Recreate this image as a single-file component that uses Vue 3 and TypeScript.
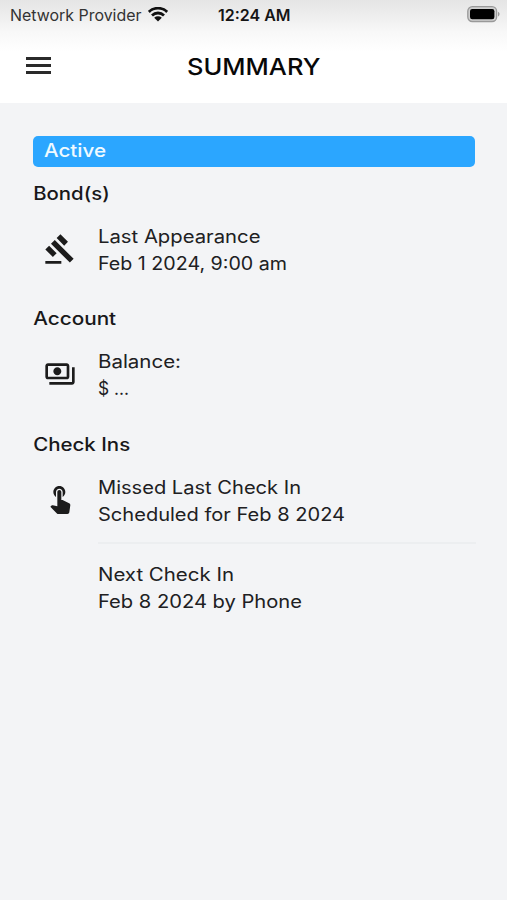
<script setup lang="ts">
interface Line { text: string; width: number }
interface Row { icon?: string; raised?: boolean; lines: Line[] }
interface Section { title: string; width: number; rows: Row[] }

const gavel = 'M1 21h12v2H1zM5.245 8.07l2.83-2.827 14.14 14.142-2.828 2.828zM12.317 1l5.657 5.656-2.83 2.83-5.654-5.66zM3.825 9.485l5.657 5.657-2.828 2.828-5.657-5.657z'
const payments = 'M19 14V6c0-1.1-.9-2-2-2H3c-1.1 0-2 .9-2 2v8c0 1.1.9 2 2 2h14c1.1 0 2-.9 2-2zm-2 0H3V6h14v8zm-7-7c-1.66 0-3 1.34-3 3s1.34 3 3 3 3-1.34 3-3-1.34-3-3-3zm13 0v11c0 1.1-.9 2-2 2H4v-2h17V7h2z'
const touch = 'M9 11.24V7.5C9 6.12 10.12 5 11.5 5S14 6.12 14 7.5v3.74c1.21-.81 2-2.18 2-3.74C16 5.01 13.99 3 11.5 3S7 5.01 7 7.5c0 1.56.79 2.93 2 3.74zm9.84 4.63l-4.54-2.26c-.17-.07-.35-.11-.54-.11H13v-6c0-.83-.67-1.5-1.5-1.5S10 6.67 10 7.5v10.74l-3.43-.72c-.08-.01-.15-.03-.24-.03-.31 0-.59.13-.79.33l-.79.8 4.94 4.94c.27.27.65.44 1.06.44h6.79c.75 0 1.33-.55 1.44-1.28l.75-5.27c.01-.07.02-.14.02-.2 0-.62-.38-1.16-.91-1.38z'

const sections: Section[] = [
  { title: 'Bond(s)', width: 76.5, rows: [
    { icon: gavel, lines: [{ text: 'Last Appearance', width: 162.5 }, { text: 'Feb 1 2024, 9:00 am', width: 189 }] },
  ] },
  { title: 'Account', width: 83, rows: [
    { icon: payments, lines: [{ text: 'Balance:', width: 83 }, { text: '$ ...', width: 31 }] },
  ] },
  { title: 'Check Ins', width: 97, rows: [
    { icon: touch, raised: true, lines: [{ text: 'Missed Last Check In', width: 203 }, { text: 'Scheduled for Feb 8 2024', width: 247 }] },
    { lines: [{ text: 'Next Check In', width: 136 }, { text: 'Feb 8 2024 by Phone', width: 204 }] },
  ] },
]
</script>

<template>
  <div class="screen">
    <header class="top">
      <div class="status">
        <div class="carrier">
          <svg class="provider" width="133" height="22"><text x="0" y="16.7" textLength="131.5" lengthAdjust="spacingAndGlyphs">Network Provider</text></svg>
          <svg class="wifi" width="20" height="15" viewBox="0 0 20 15">
            <path d="M.8 4.9a13.3 13.3 0 0 1 18.4 0M4 8.4a8.7 8.7 0 0 1 12 0" />
            <path class="solid" d="M6.2 10.7a5.6 5.6 0 0 1 7.6 0L10 14.5z" />
          </svg>
        </div>
        <svg class="clock" width="74" height="22"><text x="0" y="16.7" textLength="72.5" lengthAdjust="spacingAndGlyphs">12:24 AM</text></svg>
        <svg class="battery" width="34" height="18" viewBox="0 0 34 18">
          <rect class="shell" x="1.8" y="1.7" width="28.8" height="14.8" rx="4.5" />
          <rect x="4" y="4" width="24.4" height="10.2" rx="2.2" />
          <path class="cap" d="M32 6.8c2 .8 2 3.8 0 4.6z" />
        </svg>
      </div>
      <div class="bar">
        <button class="menu" aria-label="Menu"><span></span><span></span><span></span></button>
        <svg class="title" width="136" height="34"><text x="1" y="25.6" textLength="133.5" lengthAdjust="spacingAndGlyphs">SUMMARY</text></svg>
      </div>
    </header>
    <main>
      <div class="badge">
        <svg width="66" height="31"><text x="0" y="21.4" textLength="62" lengthAdjust="spacingAndGlyphs">Active</text></svg>
      </div>
      <section v-for="s in sections" :key="s.title">
        <svg class="heading" width="160" height="27"><text x="0.2" y="19.5" :textLength="s.width" lengthAdjust="spacingAndGlyphs">{{ s.title }}</text></svg>
        <div v-for="(r, i) in s.rows" :key="i" class="row">
          <div class="icon" :class="{ raised: r.raised }">
            <svg v-if="r.icon" width="32" height="32" viewBox="0 0 24 24"><path :d="r.icon" /></svg>
          </div>
          <div class="lines" :class="{ divided: i > 0 }">
            <svg v-for="l in r.lines" :key="l.text" width="300" height="27"><text x="0" y="19.5" :textLength="l.width" lengthAdjust="spacingAndGlyphs">{{ l.text }}</text></svg>
          </div>
        </div>
      </section>
    </main>
  </div>
</template>

<style>
body { margin: 0; background: #f3f4f6; }
</style>

<style scoped>
.screen { width: 507px; height: 900px; overflow: hidden; background: #f3f4f6; font-family: Inter, "Open Sans", sans-serif; color: #202022; }
svg { display: block; }
text { fill: currentColor; }
.top { height: 103px; background: linear-gradient(#e5e5e5 0, #eeeeee 16px, #f8f8f8 32px, #fff 52px); }
.status { display: grid; grid-template-columns: 1fr 74px 1fr; height: 31px; padding: 4px 7px 0 10px; box-sizing: border-box; align-items: start; }
.carrier { display: flex; gap: 5px; }
.provider { font-size: 16px; color: #333; }
.wifi { margin-top: 3px; fill: none; stroke: #111; stroke-width: 2.8; }
.wifi .solid { fill: #111; stroke: none; }
.clock { font-size: 15.5px; font-weight: 600; color: #151515; }
.battery { justify-self: end; margin-top: 1px; }
.shell { fill: #d0d0d0; stroke: #999; stroke-width: 1.3; }
.cap { fill: #999; }
.bar { display: grid; grid-template-columns: 1fr 136px 1fr; align-items: center; height: 70px; padding: 0 26px; }
.menu { display: flex; flex-direction: column; gap: 4px; width: 25px; padding: 0 0 1px; border: 0; background: none; }
.menu span { width: 25px; height: 3px; background: #2a2a2a; }
.title { font-size: 23.5px; font-weight: 550; color: #080808; }
main { padding: 33px 31px 0 33px; }
.badge { width: 442px; height: 31px; padding-left: 11px; box-sizing: border-box; border-radius: 5px; background: #2ba6ff; color: #effaff; font-size: 18.3px; font-weight: 500; }
section { padding-top: 13px; margin-bottom: 20.4px; }
section + section { padding-top: 8px; }
.heading { font-size: 18px; font-weight: 550; margin-bottom: 16px; color: #18181a; }
.row { display: flex; }
.icon { width: 54px; padding: 10px 0 0 11px; fill: #1c1c1c; }
.raised { padding-top: 8px; }
.lines { flex: 1; font-size: 18px; }
.divided { border-top: 2px solid #eceef0; margin-top: 14px; padding-top: 17.4px; }
</style>
